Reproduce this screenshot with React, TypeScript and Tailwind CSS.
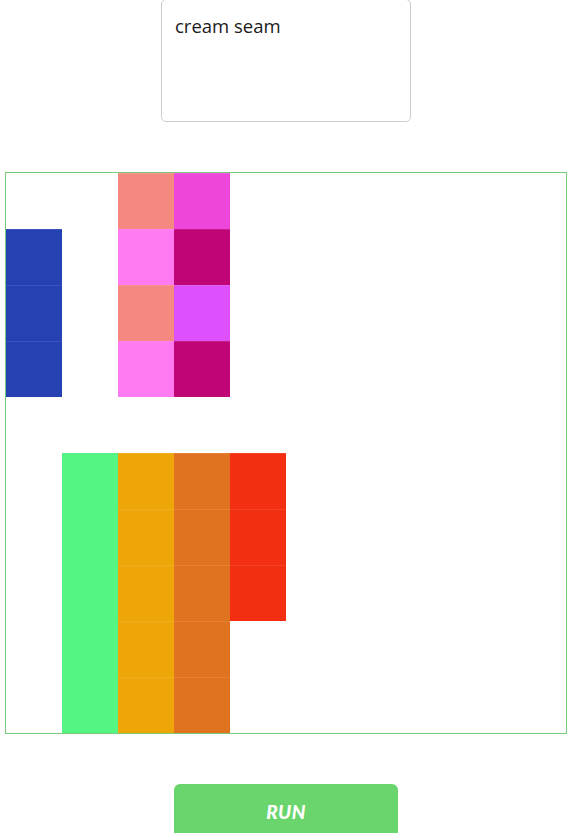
import { useState } from "react";

// 10x10 board, null = empty cell
const C = {
  salmon: "bg-[#f58880] border-t border-white/10",
  magenta: "bg-[#ee46db] border-t border-white/10",
  pink: "bg-[#fd7af0] border-t border-white/10",
  plum: "bg-[#c00577] border-t border-white/10",
  violet: "bg-[#de4ffd] border-t border-white/10",
  blue: "bg-[#2541b2] border-t border-white/10",
  green: "bg-[#55f584]",
  amber: "bg-[#eda507] border-t border-white/10",
  orange: "bg-[#e07320] border-t border-white/10",
  red: "bg-[#f42e11] border-t border-white/10",
};

const BOARD: (string | null)[][] = [
  [null, null, C.salmon, C.magenta, null, null, null, null, null, null],
  [C.blue, null, C.pink, C.plum, null, null, null, null, null, null],
  [C.blue, null, C.salmon, C.violet, null, null, null, null, null, null],
  [C.blue, null, C.pink, C.plum, null, null, null, null, null, null],
  [null, null, null, null, null, null, null, null, null, null],
  [null, C.green, C.amber, C.orange, C.red, null, null, null, null, null],
  [null, C.green, C.amber, C.orange, C.red, null, null, null, null, null],
  [null, C.green, C.amber, C.orange, C.red, null, null, null, null, null],
  [null, C.green, C.amber, C.orange, null, null, null, null, null, null],
  [null, C.green, C.amber, C.orange, null, null, null, null, null, null],
];

export default function App() {
  const [text, setText] = useState("cream seam");

  return (
    <div className="min-h-screen bg-white flex flex-col items-center pr-px font-['Open_Sans',sans-serif]">
      <textarea
        value={text}
        onChange={e => setText(e.target.value)}
        className="-mt-px w-[250px] h-[123px] px-[13px] py-[12px] border border-[#cccccc] rounded-[5px] text-[18.5px] text-[#1a1a1a] resize-none outline-none"
      />

      <div className="mt-[50px] w-[562px] h-[562px] border border-[#79c97a] grid grid-cols-10 grid-rows-10">
        {BOARD.flat().map((cell, i) => (
          <div key={i} className={cell ?? ""} />
        ))}
      </div>

      <button className="mt-[50px] w-[224px] h-[56px] rounded-[6px] bg-[#6ad56c] text-white text-[19px] font-black italic font-['Lato',sans-serif] tracking-wide">
        RUN
      </button>
    </div>
  );
}
